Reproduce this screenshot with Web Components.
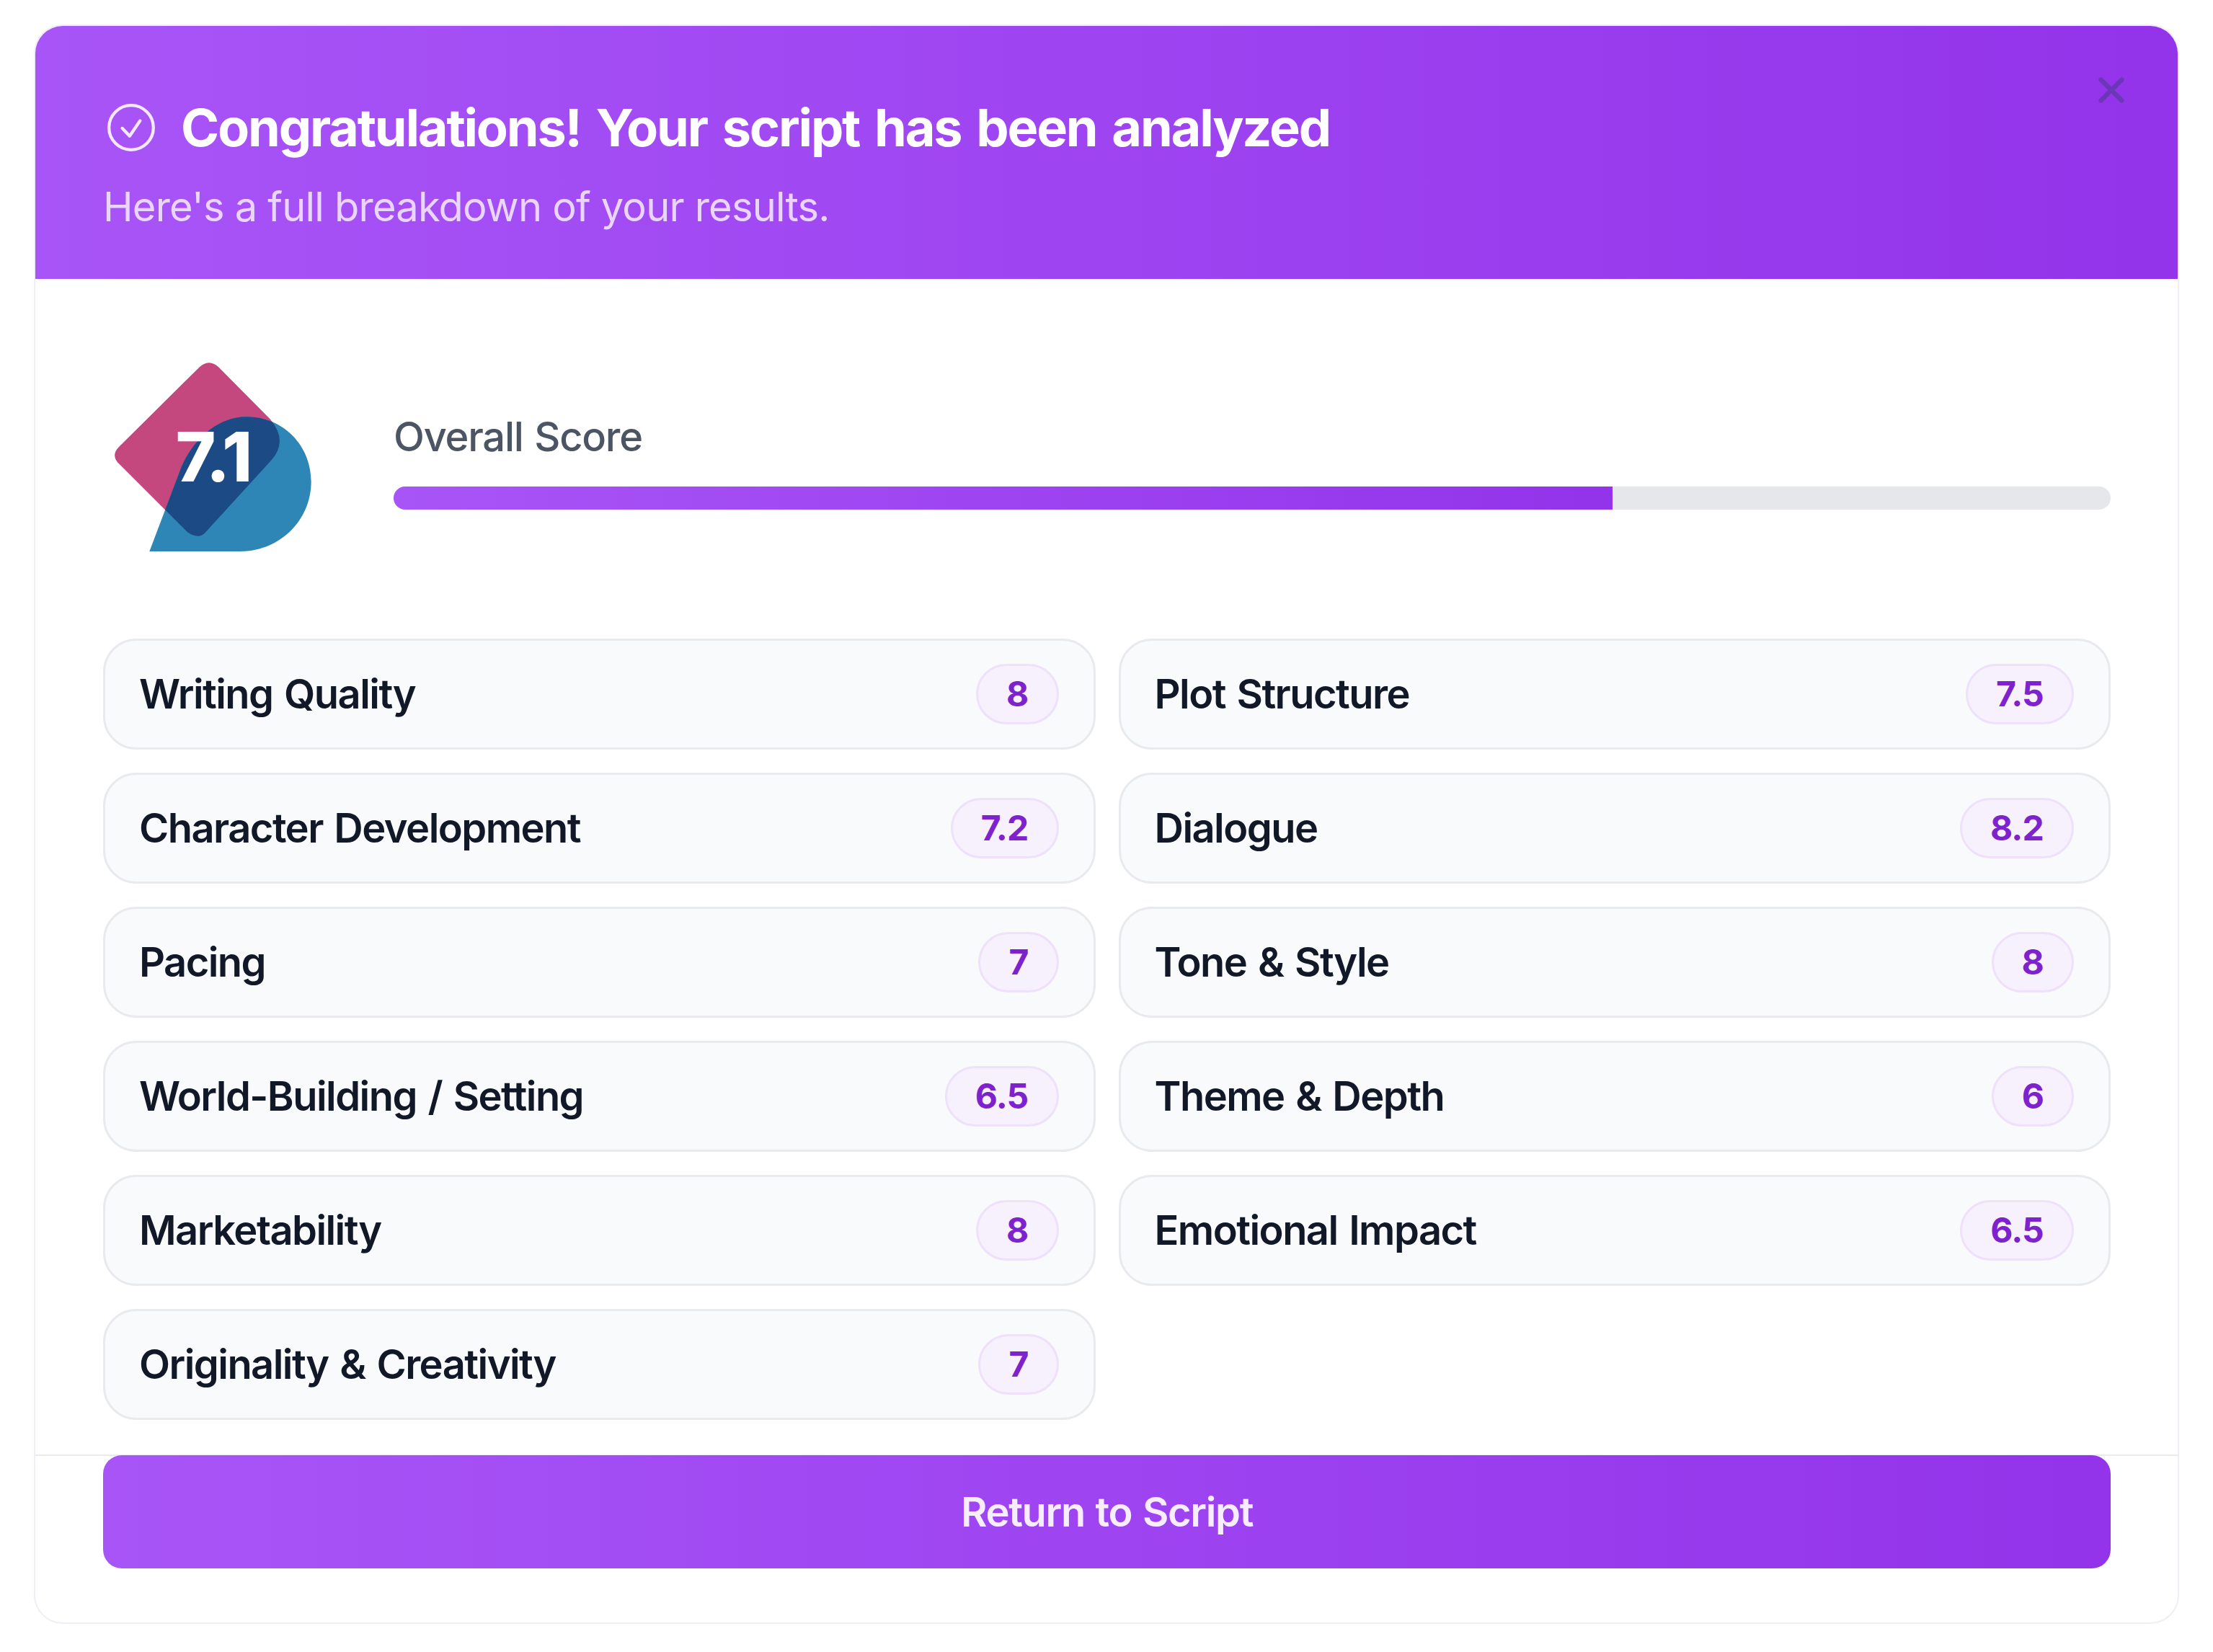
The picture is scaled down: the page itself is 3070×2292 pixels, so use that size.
<!DOCTYPE html>
<html lang="en"><head><meta charset="utf-8"><title>Results</title>
<style>
html,body{margin:0;padding:0;background:#fff}
body{width:3070px;height:2292px;overflow:hidden;font-family:Inter,"Liberation Sans",sans-serif;padding:34px 47px 0;box-sizing:border-box}
</style></head><body>
<result-modal>
  <span slot="title">Congratulations! Your script has been analyzed</span>
  <span slot="subtitle">Here's a full breakdown of your results.</span>
  <score-summary slot="summary" score="7.1" label="Overall Score"></score-summary>
  <score-row slot="rows" score="8">Writing Quality</score-row>
  <score-row slot="rows" score="7.5">Plot Structure</score-row>
  <score-row slot="rows" score="7.2">Character Development</score-row>
  <score-row slot="rows" score="8.2">Dialogue</score-row>
  <score-row slot="rows" score="7">Pacing</score-row>
  <score-row slot="rows" score="8">Tone &amp; Style</score-row>
  <score-row slot="rows" score="6.5">World-Building / Setting</score-row>
  <score-row slot="rows" score="6">Theme &amp; Depth</score-row>
  <score-row slot="rows" score="8">Marketability</score-row>
  <score-row slot="rows" score="6.5">Emotional Impact</score-row>
  <score-row slot="rows" score="7">Originality &amp; Creativity</score-row>
  <span slot="action">Return to Script</span>
</result-modal>
<script>
class ResultModal extends HTMLElement{
  constructor(){super();this.attachShadow({mode:'open'}).innerHTML=`
  <style>
  :host{display:flex;flex-direction:column;box-sizing:border-box;width:2976px;height:2219px;position:relative;background:#fff;border:2px solid #eeeef4;border-radius:40px;overflow:hidden}
  header{box-sizing:border-box;height:353px;margin:-2px -2px 0;padding:0 96px;background:linear-gradient(90deg,#a855f7,#9333ea);display:flex;flex-direction:column;flex:none}
  .t{display:flex;align-items:center;gap:32px;margin-top:106px;height:74px;color:#fff;font-size:72px;font-weight:650;letter-spacing:-2.2px;word-spacing:6px;line-height:74px;white-space:nowrap}
  .t svg{width:74px;height:74px;margin-left:2px;flex:none;color:#f3e8ff}
  .s{margin-top:40px;color:#e9d5ff;font-size:56px;letter-spacing:-.8px;line-height:66px;font-weight:400;white-space:nowrap}
  .x{position:absolute;left:2851px;top:60px;width:58px;height:58px;color:#6a37b6}
  main{flex:1;padding:93px 93px 0 94px;display:flex;flex-direction:column}
  .g{display:grid;grid-template-columns:1fr 1fr;gap:32px;margin-top:96px}
  footer{flex:none;border-top:2px solid #eaeaf0;padding:0 93px 75px 94px}
  .b{height:157px;margin-top:-1px;border-radius:26px;background:linear-gradient(90deg,#a855f7,#9333ea);color:#f6eefe;font-size:56px;letter-spacing:-1.35px;word-spacing:2px;font-weight:600;display:flex;align-items:center;justify-content:center}
  </style>
  <header>
    <div class="t"><svg viewBox="0 0 24 24" fill="none" stroke="currentColor" stroke-width="1.4" stroke-linecap="round" stroke-linejoin="round"><circle cx="12" cy="12" r="10"/><path d="M8 12.3 11.3 15.8 16 8.9"/></svg><slot name="title"></slot></div>
    <div class="s"><slot name="subtitle"></slot></div>
  </header>
  <svg class="x" viewBox="0 0 24 24" fill="none" stroke="currentColor" stroke-width="2.6" stroke-linecap="round"><path d="M18 6 6 18M6 6l12 12"/></svg>
  <main><slot name="summary"></slot><div class="g"><slot name="rows"></slot></div></main>
  <footer><div class="b"><slot name="action"></slot></div></footer>`;}
}
class ScoreSummary extends HTMLElement{
  constructor(){super();this.attachShadow({mode:'open'}).innerHTML=`
  <style>
  :host{display:flex;align-items:center;gap:64px;height:310px}
  svg{width:339px;height:310px;flex:none}
  .c{flex:1;display:flex;flex-direction:column;gap:35px;margin-top:9px}
  .l{color:#4b5563;font-size:56px;letter-spacing:-1.25px;word-spacing:2px;line-height:68px;font-weight:500}
  .tr{height:32px;border-radius:16px;background:#e5e7eb;overflow:hidden}
  .f{height:100%;width:71%;background:linear-gradient(90deg,#a855f7,#9333ea)}
  text{font-family:Inter,"Liberation Sans",sans-serif}
  </style>
  <svg viewBox="69 0 1017 930">
    <defs>
      <path id="sq" d="M466 92Q510 48 554 92L765 305Q840 395 770 475L500 770Q470 810 420 775L135 490Q100 455 135 420Z"/>
      <clipPath id="cp"><use href="#sq"/></clipPath>
    </defs>
    <use href="#sq" fill="#c4477d"/>
    <path d="M262 855L385 530C430 400 540 295 665 295C820 295 935 415 935 565C935 725 805 855 640 855Z" fill="#2e86b7"/>
    <path d="M262 855L385 530C430 400 540 295 665 295C820 295 935 415 935 565C935 725 805 855 640 855Z" fill="#1c4a85" clip-path="url(#cp)"/>
    <text x="528" y="565" text-anchor="middle" fill="#fff" font-size="284" font-weight="800" letter-spacing="-6"></text>
  </svg>
  <div class="c"><div class="l"></div><div class="tr"><div class="f"></div></div></div>`;
  this.shadowRoot.querySelector('text').textContent=this.getAttribute('score');
  this.shadowRoot.querySelector('.l').textContent=this.getAttribute('label');}
}
class ScoreRow extends HTMLElement{
  constructor(){super();this.attachShadow({mode:'open'}).innerHTML=`
  <style>
  :host{box-sizing:border-box;display:flex;align-items:center;justify-content:space-between;height:154px;padding:0 48px 0 47px;background:#f9fafb;border:3px solid #e9eaee;border-radius:46px;color:#111827;font-size:56px;font-weight:560;letter-spacing:-1.55px;word-spacing:3px;white-space:nowrap}
  .p{box-sizing:border-box;height:84px;padding:0 39px 2px;display:flex;align-items:center;border-radius:42px;background:#f6f1fd;border:3px solid #efe0fb;color:#7e22ce;font-size:48px;font-weight:700;letter-spacing:-.8px;word-spacing:0}
  </style><slot></slot><span class="p"></span>`;
  this.shadowRoot.querySelector('.p').textContent=this.getAttribute('score');}
}
customElements.define('result-modal',ResultModal);
customElements.define('score-summary',ScoreSummary);
customElements.define('score-row',ScoreRow);
</script>
</body></html>
